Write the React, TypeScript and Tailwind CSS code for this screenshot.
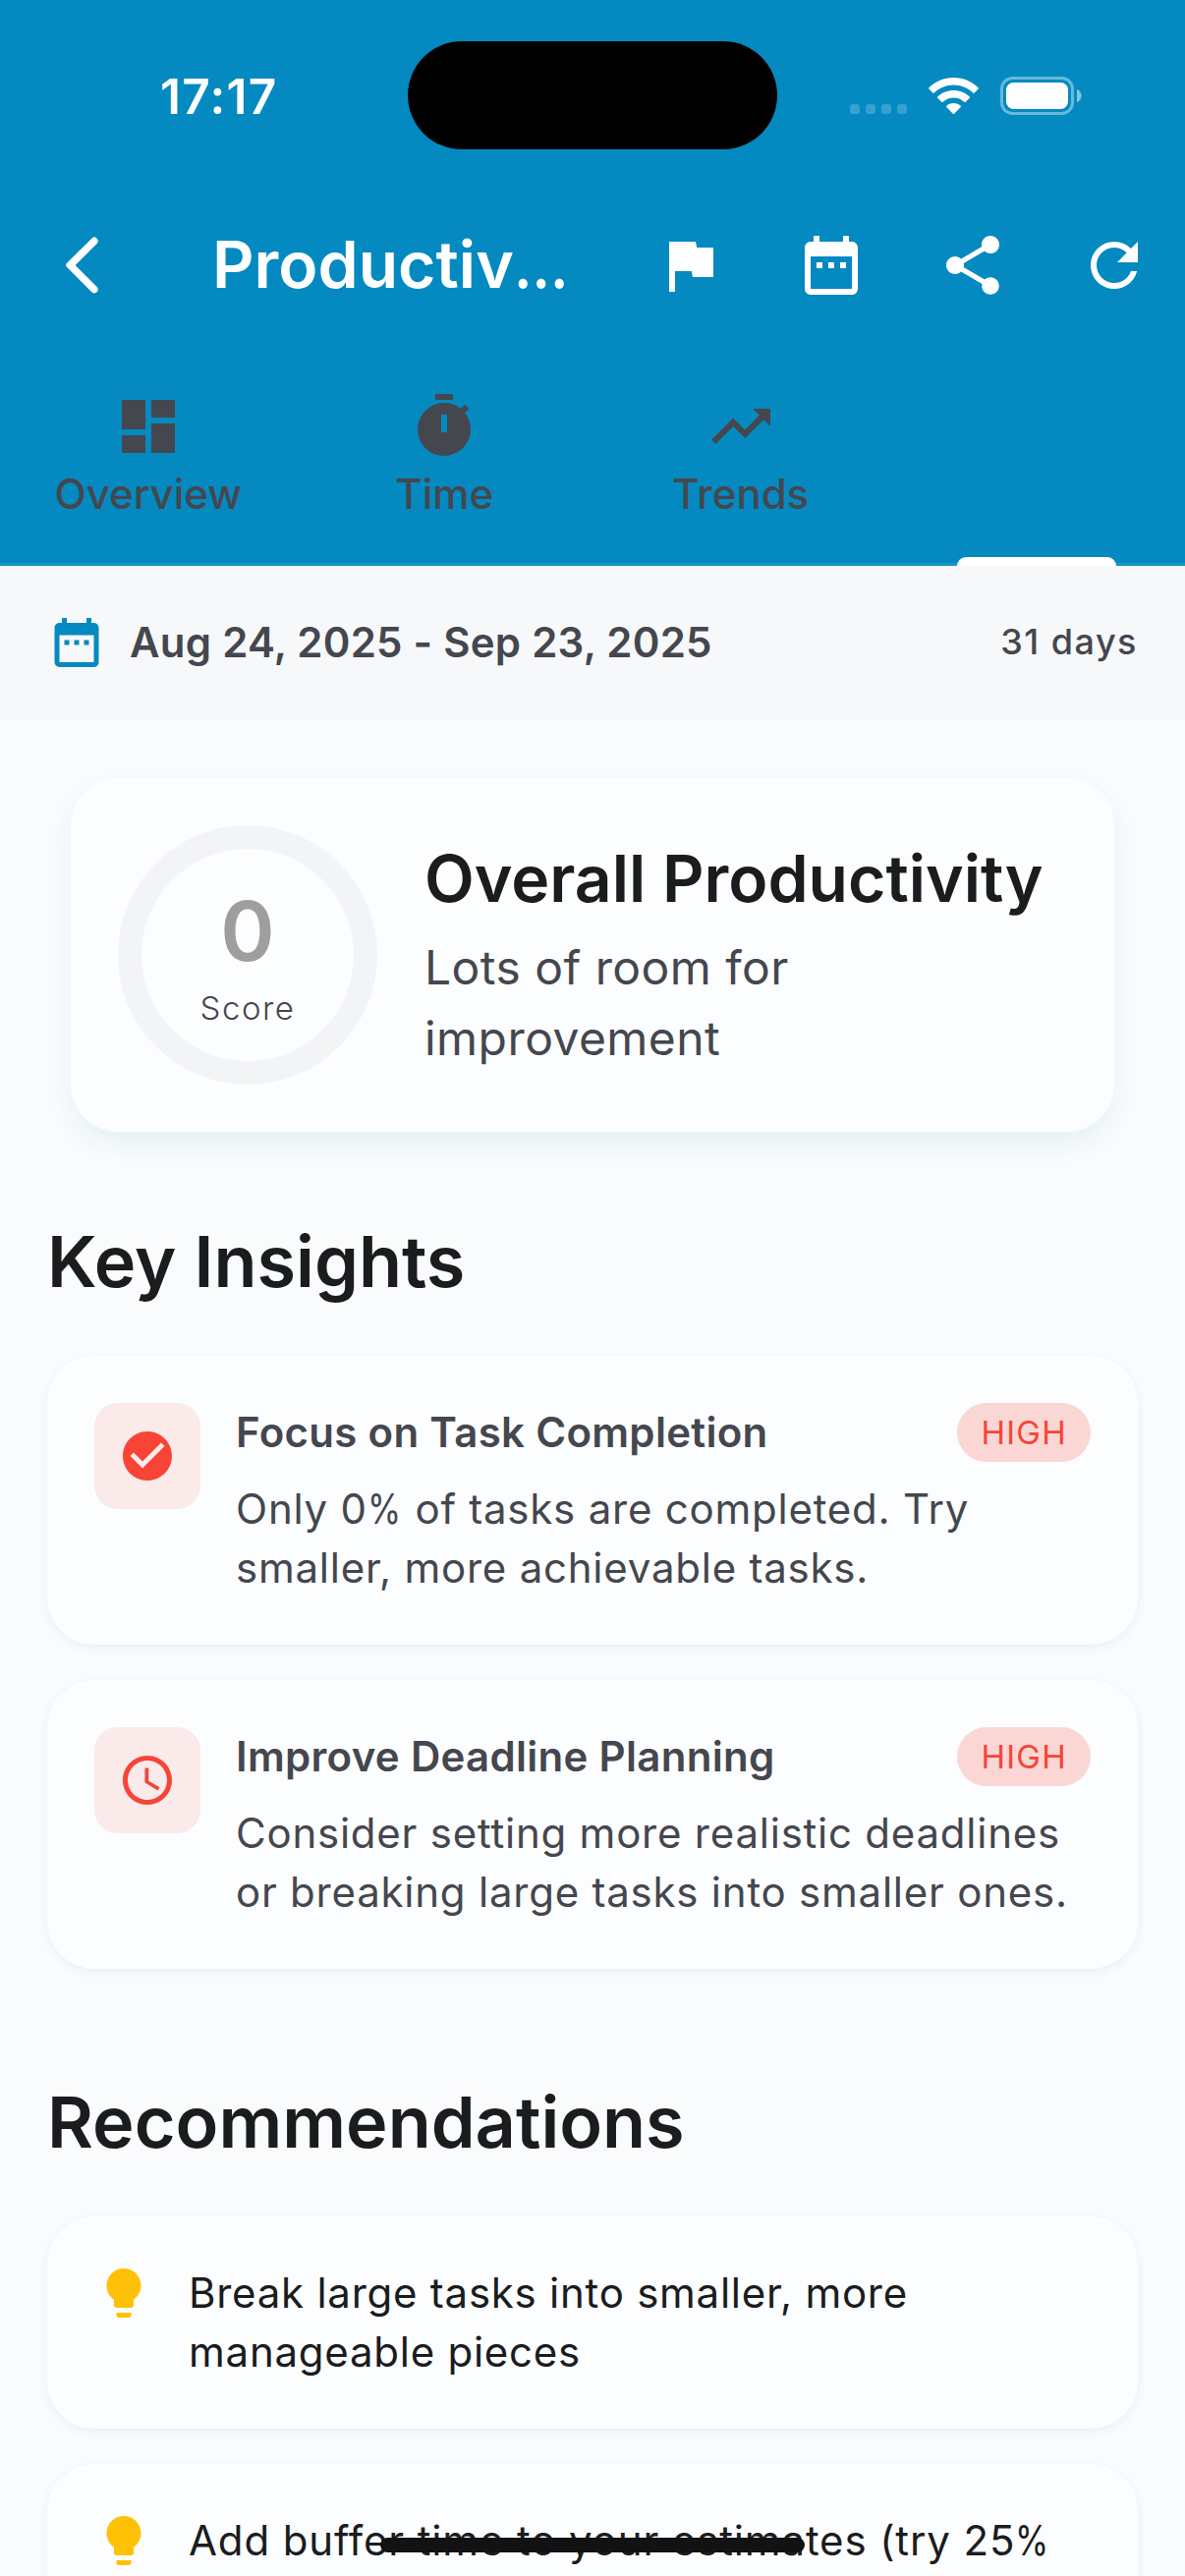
import type { ReactNode } from "react";
import {
  MdAccessTime,
  MdCheckCircle,
  MdDashboard,
  MdDateRange,
  MdFlag,
  MdLightbulb,
  MdRefresh,
  MdShare,
  MdTimer,
  MdTrendingUp,
} from "react-icons/md";

function StatusBar() {
  return (
    <div className="relative flex h-[186px] items-start justify-between pl-[163px] pr-[105px] pt-[68px]">
      <span className="text-[49.5px] font-semibold leading-[60px] tracking-[1.3px] text-white">17:17</span>
      <div className="absolute left-[415px] top-[42px] h-[110px] w-[376px] rounded-full bg-black" />
      <div className="flex items-start pt-[10px]">
        <div className="mt-[28px] flex gap-[6px]">
          {[0, 1, 2, 3].map((dot) => (
            <span key={dot} className="size-[10px] rounded-[3px] bg-white/20" />
          ))}
        </div>
        <svg className="ml-[22px] mt-px h-[38px] w-[51px]" viewBox="0 0 51 38" fill="white">
          <path d="M25.5 0C35.3 0 44.2 3.9 50.6 10.2c.4.4.4.9 0 1.3l-3.9 4c-.4.4-1 .4-1.4 0C40.2 10.5 33.2 7.5 25.5 7.5S10.8 10.5 5.7 15.5c-.4.4-1 .4-1.4 0l-3.9-4c-.4-.4-.4-.9 0-1.3C6.8 3.9 15.7 0 25.5 0z" />
          <path d="M25.5 13c6.3 0 12 2.4 16.2 6.3.4.4.4 1 0 1.4l-4 4c-.4.4-1 .4-1.4 0-2.9-2.6-6.7-4.2-10.8-4.2s-7.9 1.6-10.8 4.2c-.4.4-1 .4-1.4 0l-4-4c-.4-.4-.4-1 0-1.4C13.5 15.4 19.2 13 25.5 13z" />
          <path d="M25.5 26c2.8 0 5.3 1 7.2 2.7.4.4.4.9 0 1.3l-6.5 6.8c-.4.4-1 .4-1.4 0L18.3 30c-.4-.4-.4-.9 0-1.3C20.2 27 22.7 26 25.5 26z" />
        </svg>
        <svg className="ml-[22px] h-[39px] w-[83px]" viewBox="0 0 83 39" fill="white">
          <rect x="1.5" y="1.5" width="72" height="36" rx="11" fill="none" stroke="white" strokeOpacity="0.4" strokeWidth="3" />
          <rect x="6" y="6" width="63" height="27" rx="7.5" />
          <path d="M78 13c3 1 4.500 3.500 4.500 6.500S81 25 78 26z" fillOpacity="0.5" />
        </svg>
      </div>
    </div>
  );
}

function AppBar() {
  return (
    <div className="flex h-[168px] items-center pl-[48px] pr-[36px] text-[72px] text-white">
      <svg className="size-[72px]" viewBox="0 0 24 24" fill="currentColor">
        <path d="M16.88 2.88a1.25 1.25 0 0 0-1.77 0L6.7 11.29a.996.996 0 0 0 0 1.41l8.41 8.41c.49.49 1.28.49 1.77 0s.49-1.28 0-1.77L9.54 12l7.35-7.35c.48-.49.48-1.28-.01-1.77z" />
      </svg>
      <h1 className="mb-[2px] ml-[96px] w-[450px] text-[66px] font-semibold leading-[84px]">
        Productiv<span className="inline-block origin-left scale-x-[0.88]">…</span>
      </h1>
      <div className="flex gap-[72px]">
        <MdFlag />
        <MdDateRange />
        <MdShare />
        <MdRefresh />
      </div>
    </div>
  );
}

function Tab({ icon, label }: { icon: ReactNode; label: string }) {
  return (
    <div className="flex flex-1 flex-col items-center pt-[44px] text-[72px] text-[#44474e]">
      {icon}
      <span className="mt-[3px] text-[42px] font-medium leading-[60px]">{label}</span>
    </div>
  );
}

function Tabs() {
  return (
    <div className="flex h-[222px] border-b-[3px] border-[#1798c1]">
      <Tab icon={<MdDashboard />} label="Overview" />
      <Tab icon={<MdTimer />} label="Time" />
      <Tab icon={<MdTrendingUp />} label="Trends" />
      <div className="flex flex-1 items-end justify-center">
        <div className="-mb-[3px] h-[9px] w-[162px] rounded-t-[9px] bg-white" />
      </div>
    </div>
  );
}

function ScoreCard() {
  return (
    <section className="mx-[24px] flex h-[360px] items-center rounded-[48px] bg-[#fcfdfe] px-[48px] shadow-[0_12px_24px_rgba(4,115,160,0.075)]">
      <div className="flex size-[264px] shrink-0 flex-col items-center justify-center rounded-full border-[24px] border-[#f3f4f6]">
        <span className="text-[84px] font-semibold leading-[108px] text-[#9e9e9e]">0</span>
        <span className="text-[33px] font-light leading-[48px] tracking-[1.5px] text-[#44474e]">Score</span>
      </div>
      <div className="ml-[48px]">
        <h2 className="whitespace-nowrap text-[66px] font-semibold leading-[84px] text-[#1a1c1e]">Overall Productivity</h2>
        <p className="mt-[13px] -mb-px text-[48px] leading-[72px] tracking-[0.45px] text-[#44474e]">
          Lots of room for
          <br />
          improvement
        </p>
      </div>
    </section>
  );
}

function Heading({ children }: { children: ReactNode }) {
  return <h2 className="text-[72px] font-semibold leading-[96px] text-[#1a1c1e]">{children}</h2>;
}

/** Condensed percent sign used in body copy. */
function Percent() {
  return <span className="-mr-[6px] inline-block origin-left scale-x-[0.83]">%</span>;
}

function InsightCard({ icon, title, children }: { icon: ReactNode; title: string; children: ReactNode }) {
  return (
    <article className="flex gap-[36px] rounded-[48px] bg-[#fcfdfe] p-[48px] shadow-[0_3px_9px_rgba(4,115,160,0.075)]">
      <div className="flex size-[108px] shrink-0 items-center justify-center rounded-[24px] bg-[#faeae9] text-[60px] text-[#f74436]">
        {icon}
      </div>
      <div className="flex-1">
        <div className="flex items-center justify-between">
          <h3 className="text-[42px] font-semibold leading-[60px] tracking-[0.3px] text-[#44474e]">{title}</h3>
          <span className="rounded-full bg-[#fad7d5] px-[24px] py-[6px] text-[33px] leading-[48px] tracking-[1.25px] text-[#f74436]">
            HIGH
          </span>
        </div>
        <p className="mt-[18px] whitespace-nowrap text-[42px] leading-[60px] tracking-[0.77px] text-[#44474e]">
          {children}
        </p>
      </div>
    </article>
  );
}

function RecommendationCard({ children }: { children: ReactNode }) {
  return (
    <article className="flex h-[216px] gap-[36px] rounded-[48px] bg-[#fcfdfe] p-[48px] shadow-[0_3px_9px_rgba(4,115,160,0.075)]">
      <MdLightbulb className="size-[60px] shrink-0 text-[#ffc107]" />
      <p className="whitespace-nowrap text-[42px] leading-[60px] tracking-[0.75px] text-[#1a1c1e]">{children}</p>
    </article>
  );
}

export default function App() {
  return (
    <div className="relative h-[2622px] w-[1206px] overflow-hidden bg-[#f9fbfd] font-['Inter',sans-serif]">
      <header className="bg-[#048ac1]">
        <StatusBar />
        <AppBar />
        <Tabs />
      </header>
      <div className="flex h-[156px] items-center bg-[#f7f8fa] px-[48px] text-[#44474e]">
        <MdDateRange className="size-[60px] text-[#048ac1]" />
        <span className="ml-[24px] flex-1 text-[42px] font-semibold leading-[60px] tracking-[0.25px]">
          Aug 24, 2025 - Sep 23, 2025
        </span>
        <span className="mb-[2px] text-[36px] font-medium leading-[48px] tracking-[1.5px]">31 days</span>
      </div>
      <main className="px-[48px] pt-[60px]">
        <ScoreCard />
        <div className="mt-[84px]">
          <Heading>Key Insights</Heading>
        </div>
        <div className="mt-[48px] flex flex-col gap-[36px]">
          <InsightCard icon={<MdCheckCircle />} title="Focus on Task Completion">
            Only 0<Percent /> of tasks are completed. Try
            <br />
            smaller, more achievable tasks.
          </InsightCard>
          <InsightCard icon={<MdAccessTime />} title="Improve Deadline Planning">
            Consider setting more realistic deadlines
            <br />
            or breaking large tasks into smaller ones.
          </InsightCard>
        </div>
        <div className="mt-[108px]">
          <Heading>Recommendations</Heading>
        </div>
        <div className="mt-[48px] flex flex-col gap-[36px]">
          <RecommendationCard>
            Break large tasks into smaller, more
            <br />
            manageable pieces
          </RecommendationCard>
          <RecommendationCard>
            <span className="tracking-[0.87px]">
              Add buffer time to your estimates (try 25
              <Percent />
            </span>
          </RecommendationCard>
        </div>
      </main>
      <div className="absolute left-[387px] top-[2583px] h-[15px] w-[432px] rounded-full bg-[#121212]" />
    </div>
  );
}
